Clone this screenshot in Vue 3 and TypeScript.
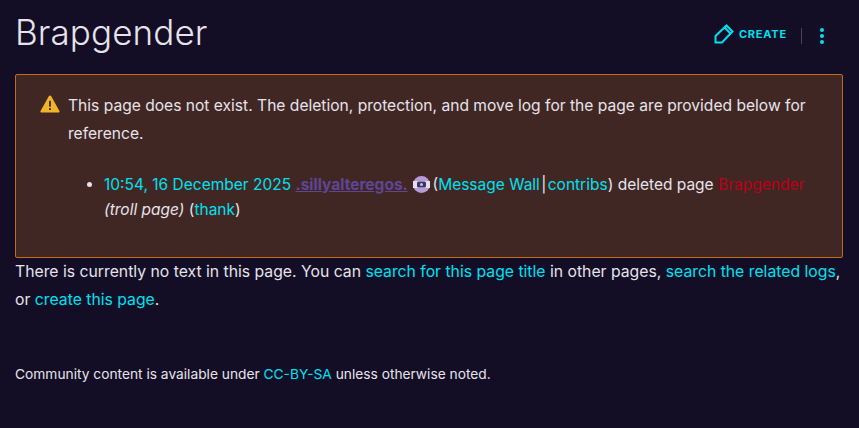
<template>
  <div class="page">
    <header class="page-header">
      <h1 class="page-title">Brapgender</h1>
      <div class="page-actions">
        <a class="create-btn">
          <svg class="pencil" width="20" height="20" viewBox="0 0 20 20" fill="none" stroke="currentColor" stroke-width="2">
            <path d="M1.500 12 12.500 1.500l6 6L8 18.500H1.500z" />
            <path d="M10.500 3.500l6 6" />
          </svg>
          <span>CREATE</span>
        </a>
        <span class="divider"></span>
        <div class="more">
          <i></i><i></i><i></i>
        </div>
      </div>
    </header>

    <div class="notice">
      <div class="notice-head">
        <svg class="warn" width="20" height="18" viewBox="0 0 22 20">
          <path d="M11 .5c.5 0 .9.3 1.200.7l9.300 16.600c.5.8-.1 1.700-1 1.700H1.500c-.9 0-1.500-.9-1-1.700L9.800 1.200C10.100.8 10.500.5 11 .5z" fill="#f0b429" />
          <rect x="10" y="6.500" width="2" height="6.500" fill="#412724" />
          <rect x="10" y="14.500" width="2" height="2.200" fill="#412724" />
        </svg>
        <p>This page does not exist. The deletion, protection, and move log for the page are provided below for reference.</p>
      </div>
      <ul class="log">
        <li><a>10:54, 16 December 2025</a> <a class="user">.sillyalteregos.</a> <svg class="avatar" width="17" height="17" viewBox="0 0 17 17">
            <circle cx="8.500" cy="8.500" r="8.500" fill="#b79ad8" />
            <rect x="0" y="5" width="17" height="7" fill="#e4def0" />
            <rect x="4" y="5.500" width="9" height="6" rx="1.500" fill="#3d3467" />
            <circle cx="8.500" cy="8.500" r="1.500" fill="#c9bde6" />
          </svg> (<a>Message Wall</a> <span class="pipe">|</span> <a>contribs</a>) deleted page <a class="missing">Brapgender</a> <em>(troll page)</em> (<a>thank</a>)</li>
      </ul>
    </div>

    <p class="no-text">
      There is currently no text in this page. You can <a>search for this page title</a> in other pages,
      <a>search the related logs</a>, or <a>create this page</a>.
    </p>

    <footer class="license">
      Community content is available under <a>CC-BY-SA</a> unless otherwise noted.
    </footer>
  </div>
</template>

<script setup lang="ts">
</script>

<style>
html,
body {
  margin: 0;
  background: #130e26;
}
</style>

<style scoped>
.page {
  box-sizing: border-box;
  height: 428px;
  padding: 0 16px 0 15px;
  background: #130e26;
  color: #e6e3ea;
  font-family: Inter, Roboto, sans-serif;
  font-size: 15.6px;
  line-height: 28px;
  overflow: hidden;
}

a {
  color: #00e0f0;
}

.page-header {
  display: flex;
  align-items: center;
  justify-content: space-between;
  height: 74px;
  padding-bottom: 9px;
  box-sizing: border-box;
}

.page-title {
  margin: -2px 0 0;
  font-size: 35px;
  font-weight: 300;
  line-height: 44px;
  letter-spacing: 0.1px;
}

.page-actions {
  display: flex;
  align-items: center;
  margin: 6px 19px 0 0;
}

.create-btn {
  display: flex;
  align-items: center;
  gap: 5px;
  margin-bottom: 4px;
  font-size: 11px;
  font-weight: 700;
  letter-spacing: 0.8px;
}

.divider {
  width: 1px;
  height: 16px;
  margin: 0 18px 0 14px;
  background: #4a4658;
}

.more {
  display: flex;
  flex-direction: column;
  gap: 2px;
}

.more i {
  width: 4px;
  height: 4px;
  border-radius: 50%;
  background: #00e0f0;
}

.notice {
  box-sizing: border-box;
  height: 184px;
  padding: 17px 24px;
  background: #412724;
  border: 1px solid #c46a1c;
  border-radius: 2px;
}

.notice-head {
  display: flex;
  gap: 8px;
}

.warn {
  flex: none;
  margin-top: 3px;
}

.notice-head p {
  margin: 0;
}

.log {
  margin: 24px 0 0;
  padding: 0 0 0 64px;
  font-size: 15.5px;
  line-height: 25px;
}

.user {
  color: #5f4596;
  font-weight: 700;
  text-decoration: underline;
}

.avatar {
  vertical-align: -3px;
  margin: 0 -2px 0 1px;
}

.pipe {
  margin: 0 -3px;
}

.missing {
  color: #ba0018;
}

.no-text {
  margin: 0;
  font-size: 15.75px;
}

.license {
  margin-top: 50px;
  font-size: 13.75px;
  line-height: 20px;
}
</style>
